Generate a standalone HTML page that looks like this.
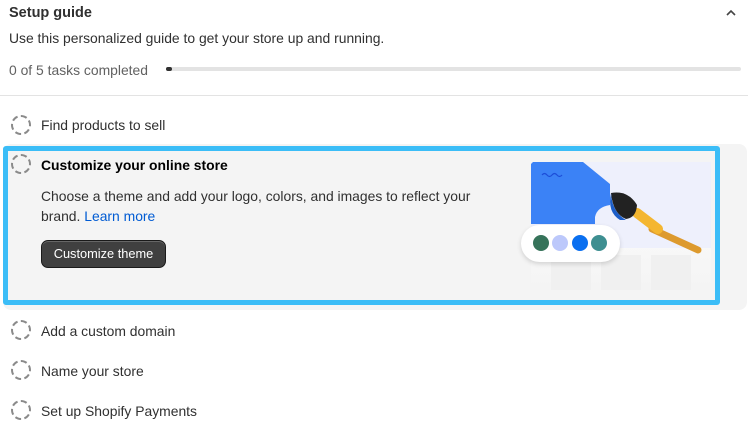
<!DOCTYPE html>
<html><head><style>
*{margin:0;padding:0;box-sizing:border-box}
body{width:748px;height:426px;background:#fff;font-family:"Liberation Sans",sans-serif;color:#303030;position:relative;overflow:hidden;font-size:13.9px}
.a{position:absolute;white-space:nowrap}
.circ{position:absolute;width:20px;height:20px;border:2px dashed #8a8a8a;border-radius:50%;left:11px}
</style></head><body>
<div class="a" style="left:9px;top:5px;font-size:14.5px;font-weight:bold">Setup guide</div>
<svg class="a" style="left:725px;top:8px" width="12" height="10"><path d="M2 7 L6 3 L10 7" fill="none" stroke="#444" stroke-width="1.6"/></svg>
<div class="a" style="left:9px;top:30px">Use this personalized guide to get your store up and running.</div>
<div class="a" style="left:9px;top:62px;color:#616161">0 of 5 tasks completed</div>
<div class="a" style="left:166px;top:67px;width:575px;height:4px;background:#e3e3e3;border-radius:2px"></div>
<div class="a" style="left:166px;top:67px;width:6px;height:4px;background:#303030;border-radius:2px"></div>
<div class="a" style="left:0;top:95px;width:748px;height:1px;background:#e3e3e3"></div>

<div class="circ" style="top:115px"></div>
<div class="a" style="left:41px;top:117px">Find products to sell</div>

<div class="a" style="left:3px;top:144px;width:744px;height:166px;background:#f4f4f4;border-radius:8px"></div>
<div class="a" style="left:3px;top:146px;width:717px;height:159px;border:5px solid #3bbdf7;border-radius:3px"></div>
<div class="circ" style="top:154px"></div>
<div class="a" style="left:41px;top:157px;font-weight:bold;color:#000">Customize your online store</div>
<div class="a" style="left:41px;top:186px;line-height:20px;white-space:normal;width:440px">Choose a theme and add your logo, colors, and images to reflect your brand. <span style="color:#005bd3">Learn more</span></div>
<div class="a" style="left:41px;top:240px;width:125px;height:28px;background:#404040;border:1px solid #1a1a1a;border-radius:7px;color:#fff;font-size:12.8px;line-height:26px;text-align:center;box-shadow:inset 0 1px 0 #666">Customize theme</div>

<svg class="a" style="left:0;top:0" width="748" height="426">
<defs><linearGradient id="f" x1="0" y1="0" x2="0" y2="1"><stop offset="0" stop-color="#fff"/><stop offset="1" stop-color="#f4f4f4"/></linearGradient></defs>
<rect x="531" y="162" width="180" height="128" fill="url(#f)"/>
<rect x="531" y="162" width="180" height="86" fill="#eef0fc"/>
<path d="M533 162 H583 L610 184 L610 205 Q597 207 595 217 L595 224 H531 V164Z" fill="#3b82f6"/>
<path d="M542 175 q2.5 -3 5 0 q2.5 3 5 0 q2.5 -3 5 0 q2.5 3 5 0" fill="none" stroke="#1d4ed8" stroke-width="1.2"/>
<rect x="551" y="255" width="40" height="35" fill="#f0f0f0"/>
<rect x="601" y="255" width="40" height="35" fill="#f0f0f0"/>
<rect x="651" y="255" width="40" height="35" fill="#f0f0f0"/>
<path d="M652 229 L698 250" stroke="#dd9a2e" stroke-width="7" stroke-linecap="round"/>
<path d="M637 213 L658 229" stroke="#f4b630" stroke-width="10" stroke-linecap="round"/>
<path d="M611 193 Q628 190 637 205 Q636 218 626 219 Q613 214 611 193Z" fill="#222"/>
<path d="M611 193 Q612 212 626 220 L620 220 Q607 212 611 193Z" fill="#1d5ec8"/>
</svg>
<div class="a" style="left:521px;top:225px;width:99px;height:37px;background:#fff;border-radius:19px;box-shadow:0 2px 5px rgba(0,0,0,.15)"></div>
<div class="a" style="left:533px;top:235px;width:16px;height:16px;border-radius:50%;background:#36735a"></div>
<div class="a" style="left:552px;top:235px;width:16px;height:16px;border-radius:50%;background:#bcc8fb"></div>
<div class="a" style="left:572px;top:235px;width:16px;height:16px;border-radius:50%;background:#0a6ff0"></div>
<div class="a" style="left:591px;top:235px;width:16px;height:16px;border-radius:50%;background:#3e8f91"></div>

<div class="circ" style="top:320px"></div>
<div class="a" style="left:41px;top:323px">Add a custom domain</div>
<div class="circ" style="top:360px"></div>
<div class="a" style="left:41px;top:363px">Name your store</div>
<div class="circ" style="top:400px"></div>
<div class="a" style="left:41px;top:403px">Set up Shopify Payments</div>
</body></html>
